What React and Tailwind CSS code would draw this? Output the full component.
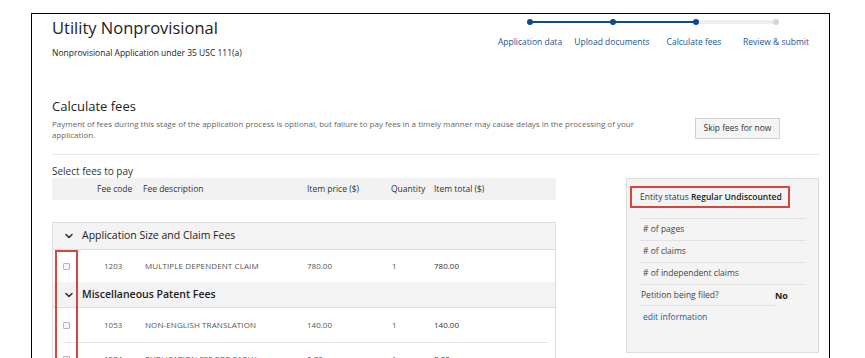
import { ChevronDown } from "lucide-react";

const steps = [
  { label: "Application data", done: true },
  { label: "Upload documents", done: true },
  { label: "Calculate fees", done: true },
  { label: "Review & submit", done: false },
];

const groups = [
  {
    title: "Application Size and Claim Fees",
    bold: false,
    rows: [{ code: "1203", desc: "MULTIPLE DEPENDENT CLAIM", price: "780.00", qty: "1", total: "780.00", h: "h-[32px]" }],
  },
  {
    title: "Miscellaneous Patent Fees",
    bold: true,
    rows: [
      { code: "1053", desc: "NON-ENGLISH TRANSLATION", price: "140.00", qty: "1", total: "140.00", h: "h-[35px]" },
      { code: "1504", desc: "PUBLICATION FEE FOR EARLY", price: "0.00", qty: "1", total: "0.00", h: "h-[32px]" },
    ],
  },
];

function Stepper() {
  return (
    <div className="w-[328px] mr-[3px] pt-[6px]">
      {/* track */}
      <div className="relative h-[4px] mx-[41px]">
        <div className="absolute left-0 top-[1px] h-[2px] w-[166px] bg-[#0d4b8a]" />
        <div className="absolute left-[166px] right-0 top-[0px] h-[4px] bg-[#eeeeee]" />
        <div className="absolute left-[-3px] top-[-1px] w-[6px] h-[6px] rounded-full bg-[#0d4b8a]" />
        <div className="absolute left-[80px] top-[-1px] w-[6px] h-[6px] rounded-full bg-[#0d4b8a]" />
        <div className="absolute left-[163px] top-[-1px] w-[6px] h-[6px] rounded-full bg-[#0d4b8a]" />
        <div className="absolute left-[243px] top-[-1px] w-[6px] h-[6px] rounded-full bg-[#d4d4d4]" />
      </div>
      <div className="grid grid-cols-4 mt-[12px]">
        {steps.map((s) => (
          <div key={s.label} className="text-center text-[8.5px] leading-[12px] text-[#1c5592] whitespace-nowrap">
            {s.label}
          </div>
        ))}
      </div>
    </div>
  );
}

function Checkbox() {
  return <div className="w-[7px] h-[7px] rounded-[1px] border border-[#b5b5b5] bg-[#f4f4f4]" />;
}

function FeeTable() {
  return (
    <div className="w-[504px]">
      {/* column headings */}
      <div className="flex items-center h-[22px] bg-[#f2f2f2] text-[8.5px] text-[#333]">
        <span className="w-[45px]" />
        <span className="w-[46px]">Fee code</span>
        <span className="w-[164px]">Fee description</span>
        <span className="w-[84px]">Item price ($)</span>
        <span className="w-[43px]">Quantity</span>
        <span>Item total ($)</span>
      </div>

      <div className="relative mt-[22px] border border-[#dddddd] border-b-0">
        {groups.map((g) => (
          <div key={g.title}>
            <div className={`flex items-center ${g.bold ? "h-[26px]" : "h-[27px]"} bg-[#f3f3f3] border-b border-[#dddddd] pl-[10px]`}>
              <ChevronDown size={12} strokeWidth={3.2} className="text-[#333]" />
              <span className={`ml-[7px] text-[10.5px] text-[#222] ${g.bold ? "font-semibold" : ""}`}>{g.title}</span>
            </div>
            {g.rows.map((r, i) => (
              <div key={r.code} className={`flex items-center ${r.h} text-[8px] text-[#555] ${i < g.rows.length - 1 ? "border-b border-[#e4e4e4] ml-[10px] mr-[8px]" : ""}`}>
                <div className={`${i < g.rows.length - 1 ? "w-[41px] pl-[0px]" : "w-[51px] pl-[10px]"} flex`}>
                  <Checkbox />
                </div>
                <span className="w-[41px]">{r.code}</span>
                <span className="w-[162px] tracking-[0.1px]">{r.desc}</span>
                <span className="w-[85px]">{r.price}</span>
                <span className="w-[42px]">{r.qty}</span>
                <span className="text-[#333]">{r.total}</span>
              </div>
            ))}
          </div>
        ))}
        {/* highlight around the checkbox column */}
        <div className="absolute left-[2px] top-[27px] w-[23px] h-[120px] border-2 border-[#d64541]" />
      </div>
    </div>
  );
}

function EntityPanel() {
  const rows = ["# of pages", "# of claims", "# of independent claims"];
  return (
    <div className="w-[193px] h-[175px] bg-[#f4f4f4] border border-[#dddddd] pt-[7px] text-[8.5px] text-[#444]">
      <div className="ml-[3px] w-[160px] h-[22px] border-2 border-[#d64541] flex items-center pl-[8px] text-[#333] whitespace-nowrap">
        Entity status&nbsp;<span className="font-semibold text-[#222]">Regular Undiscounted</span>
      </div>
      <div className="mx-[12px] mt-[10px]">
        {rows.map((r) => (
          <div key={r} className="h-[22px] border-t border-[#e2e2e2] flex items-center pl-[4px]">
            {r}
          </div>
        ))}
        <div className="h-[22px] border-t border-[#e2e2e2] flex items-center">
          <span className="w-[136px] h-full flex items-center pl-[2px] border-b border-[#e2e2e2]">Petition being filed?</span>
          <span className="font-bold text-[#222] text-[9px]">No</span>
        </div>
        <div className="h-[23px] flex items-center pl-[4px] text-[#1d5a94]">edit information</div>
      </div>
    </div>
  );
}

export default function App() {
  return (
    <div className="w-[865px] h-[358px] overflow-hidden bg-white" style={{ fontFamily: '"Open Sans", "Noto Sans", sans-serif' }}>
      <div className="ml-[31px] mt-[13px] w-[799px] h-[400px] border border-black pl-[20px] pr-[9px]">
        {/* page header */}
        <div className="flex justify-between h-[70px]">
          <div className="pt-[4px]">
            <h1 className="text-[16.5px] leading-[20px] text-[#222]">Utility Nonprovisional</h1>
            <p className="mt-[9px] text-[8.5px] leading-[12px] text-[#222]">Nonprovisional Application under 35 USC 111(a)</p>
          </div>
          <Stepper />
        </div>

        {/* calculate fees */}
        <h2 className="mt-[14px] text-[13px] leading-[16px] text-[#222]">Calculate fees</h2>
        <div className="flex items-start mt-[4px]">
          <p className="w-[600px] text-[8px] leading-[11px] text-[#666]">
            Payment of fees during this stage of the application process is optional, but failure to pay fees in a timely manner may cause delays in the processing of your application.
          </p>
          <button className="ml-auto mr-[40px] w-[85px] h-[21px] bg-[#f5f5f5] border border-[#d0d0d0] text-[8.5px] text-[#333]">
            Skip fees for now
          </button>
        </div>
        <div className="mt-[14px] h-px bg-[#e6e6e6]" />

        <p className="mt-[9px] text-[10px] leading-[14px] text-[#333]">Select fees to pay</p>
        <div className="flex">
          <FeeTable />
          <div className="ml-[70px]">
            <EntityPanel />
          </div>
        </div>
      </div>
    </div>
  );
}
